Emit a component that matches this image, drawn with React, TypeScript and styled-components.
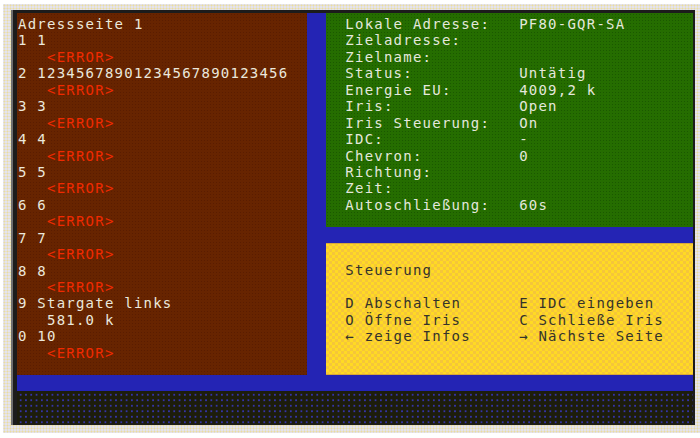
import React from "react";
import styled, { createGlobalStyle } from "styled-components";

const CW = 9.657;
const LH = 16.44;

const Global = createGlobalStyle`
  html, body { margin: 0; padding: 0; background: #ffffff; }
  body { width: 700px; height: 438px; overflow: hidden; }
  #root { width: 700px; height: 438px; }
`;

const Page = styled.div`
  width: 700px;
  height: 438px;
  display: flex;
  flex-direction: column;
  background: #ffffff;
`;

const Bezel = styled.div`
  margin: 4px 0 0 3px;
  width: 697px;
  height: 429px;
  box-sizing: border-box;
  padding: 6px 0 8px 8px;
  background-color: #e4e3ee;
  background-image: radial-gradient(circle, #eadca0 0.9px, transparent 1.1px);
  background-size: 3px 3px;
  display: flex;
`;

const Frame = styled.div`
  width: 684px;
  height: 415px;
  box-sizing: border-box;
  border-left: 2px solid #6e6e6e;
  padding: 3px 2px 1px 4px;
  background: #1c1c1c;
  display: flex;
`;

const Footer = styled.div`
  margin-top: 5px;
  height: 5px;
  background: #45454e;
`;

const Screen = styled.div`
  width: 676px;
  height: 411px;
  display: grid;
  grid-template-columns: 290px 19px 367px;
  grid-template-rows: 214px 16px 132px 16px 33px;
  background: #2424b4;
  font-family: "DejaVu Sans Mono", monospace;
  font-size: 14px;
  letter-spacing: ${CW - 14 * 0.602}px;
  line-height: ${LH}px;
  white-space: pre;
`;

const BrownPanel = styled.div`
  grid-column: 1;
  grid-row: 1 / 4;
  background-color: #672400;
  background-image: radial-gradient(circle, #5a1c00 0.7px, transparent 0.9px);
  background-size: 3px 3px;
  padding: 3px 0 0 1px;
  color: #ebe8dc;
  overflow: hidden;
`;

const GreenPanel = styled.div`
  grid-column: 3;
  grid-row: 1;
  background-color: #256d00;
  background-image: radial-gradient(circle, #1a5800 0.7px, transparent 0.9px);
  background-size: 3px 3px;
  padding: 3px 0 0 ${2 * CW}px;
  color: #e4e8dc;
`;

const YellowPanel = styled.div`
  grid-column: 3;
  grid-row: 3;
  background-color: #ffda24;
  background-image: conic-gradient(#f5c63a 25%, transparent 0 50%, #f5c63a 0 75%, transparent 0);
  background-size: 6px 6px;
  box-shadow: inset 0 1px 0 #d9a83a, inset 0 -1px 0 #d9a83a;
  padding: ${3 + LH}px 0 0 ${2 * CW}px;
  color: #34332a;
`;

const BottomStrip = styled.div`
  grid-column: 1 / -1;
  grid-row: 5;
  background-color: #1d1d0c;
  background-image: radial-gradient(ellipse 1.4px 0.9px, #3434a8 90%, transparent 100%);
  background-size: 5.3px 5.5px;
  background-position: 1px 1px;
`;

const Line = styled.div<{ $indent?: number; $error?: boolean }>`
  height: ${LH}px;
  padding-left: ${(p) => (p.$indent ?? 0) * CW}px;
  color: ${(p) => (p.$error ? "#f02a00" : "inherit")};
`;

const Pair = styled.div`
  height: ${LH}px;
  display: grid;
  grid-template-columns: ${18 * CW}px auto;
`;

const Gap = styled.div`
  height: ${LH}px;
`;

type Entry = { n: string; name: string; sub: string; err: boolean };

const entries: Entry[] = [
  { n: "1", name: "1", sub: "<ERROR>", err: true },
  { n: "2", name: "12345678901234567890123456", sub: "<ERROR>", err: true },
  { n: "3", name: "3", sub: "<ERROR>", err: true },
  { n: "4", name: "4", sub: "<ERROR>", err: true },
  { n: "5", name: "5", sub: "<ERROR>", err: true },
  { n: "6", name: "6", sub: "<ERROR>", err: true },
  { n: "7", name: "7", sub: "<ERROR>", err: true },
  { n: "8", name: "8", sub: "<ERROR>", err: true },
  { n: "9", name: "Stargate links", sub: "581.0 k", err: false },
  { n: "0", name: "10", sub: "<ERROR>", err: true },
];

const status: [string, string][] = [
  ["Lokale Adresse:", "PF80-GQR-SA"],
  ["Zieladresse:", ""],
  ["Zielname:", ""],
  ["Status:", "Untätig"],
  ["Energie EU:", "4009,2 k"],
  ["Iris:", "Open"],
  ["Iris Steuerung:", "On"],
  ["IDC:", "-"],
  ["Chevron:", "0"],
  ["Richtung:", ""],
  ["Zeit:", ""],
  ["Autoschließung:", "60s"],
];

const controls: [string, string][] = [
  ["D Abschalten", "E IDC eingeben"],
  ["O Öffne Iris", "C Schließe Iris"],
  ["← zeige Infos", "→ Nächste Seite"],
];

export default function App() {
  return (
    <Page>
      <Global />
      <Bezel>
        <Frame>
          <Screen>
            <BrownPanel>
              <Line>Adressseite 1</Line>
              {entries.map((e) => (
                <React.Fragment key={e.n}>
                  <Line>{`${e.n} ${e.name}`}</Line>
                  <Line $indent={3} $error={e.err}>
                    {e.sub}
                  </Line>
                </React.Fragment>
              ))}
            </BrownPanel>
            <GreenPanel>
              {status.map(([k, v]) => (
                <Pair key={k}>
                  <span>{k}</span>
                  <span>{v}</span>
                </Pair>
              ))}
            </GreenPanel>
            <YellowPanel>
              <Line>Steuerung</Line>
              <Gap />
              {controls.map(([a, b]) => (
                <Pair key={a}>
                  <span>{a}</span>
                  <span>{b}</span>
                </Pair>
              ))}
            </YellowPanel>
            <BottomStrip />
          </Screen>
        </Frame>
      </Bezel>
      <Footer />
    </Page>
  );
}
